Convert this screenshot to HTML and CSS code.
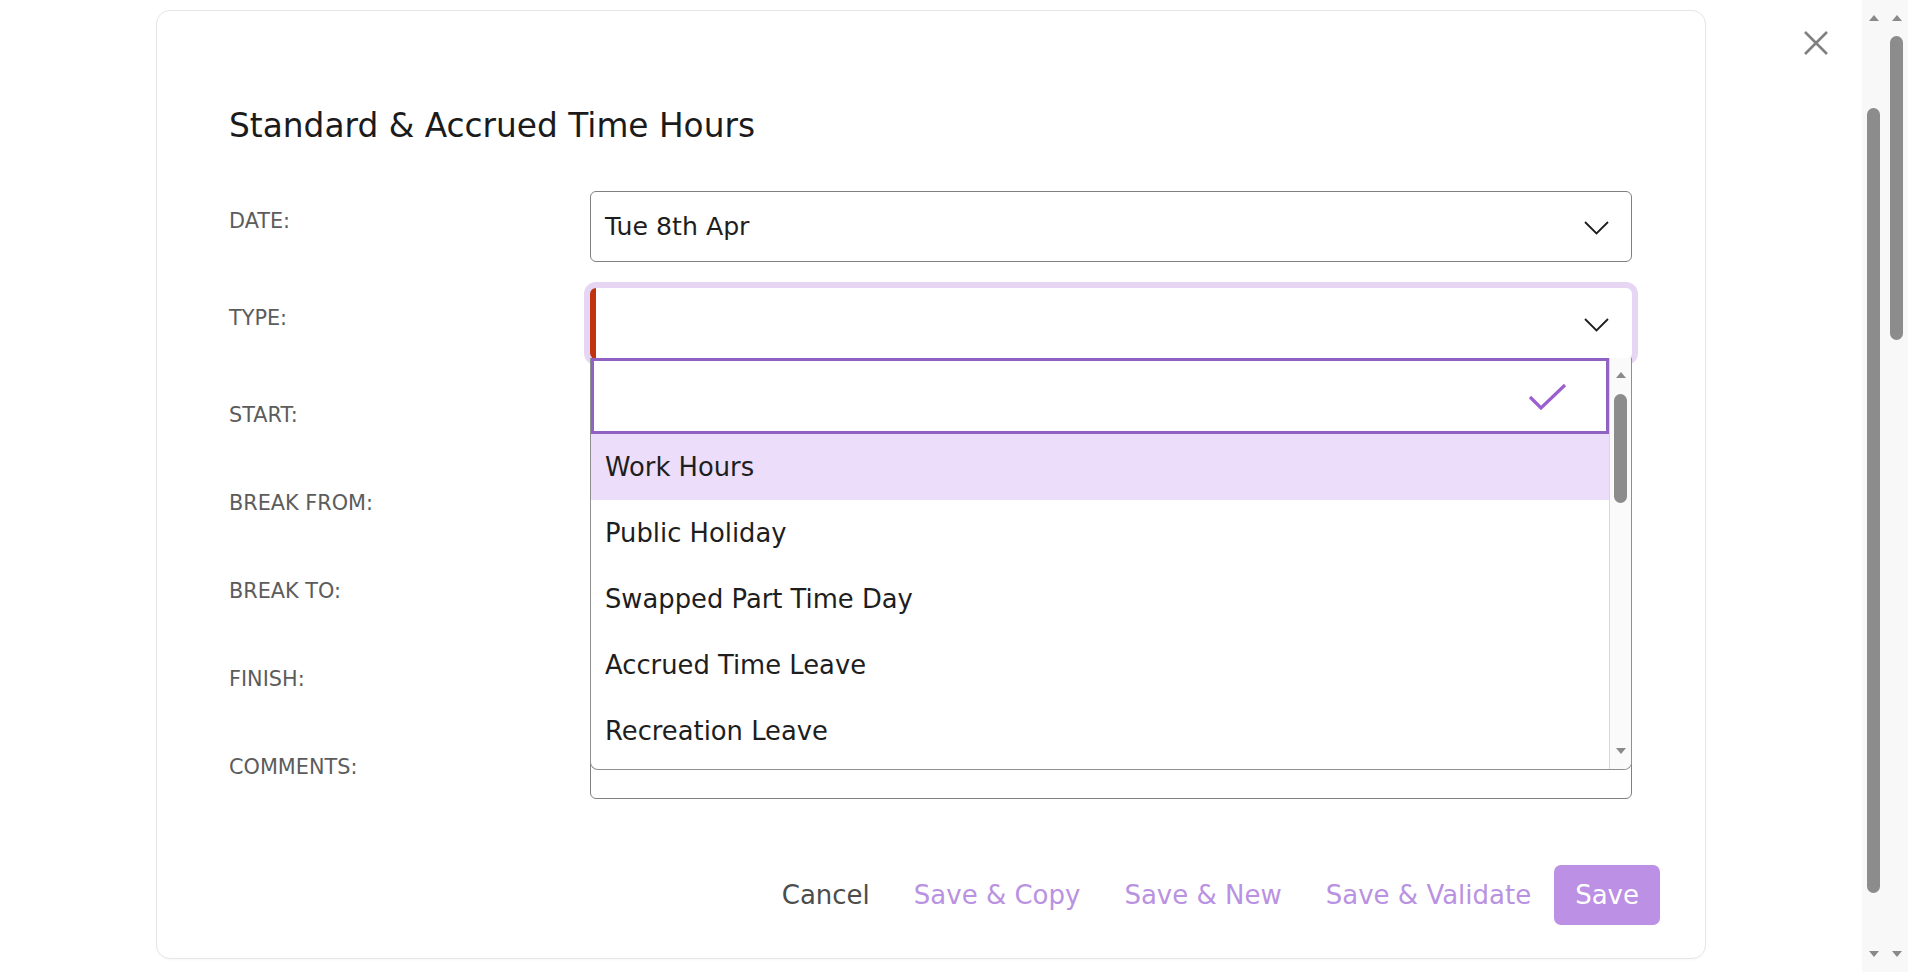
FILE: index.html
```html
<!DOCTYPE html>
<html lang="en">
<head>
<meta charset="utf-8">
<title>Standard &amp; Accrued Time Hours</title>
<link rel="stylesheet" href="styles.css">
</head>
<body>
<div class="stage">
  <div class="modal">
    <div class="modal-body">
      <h1 class="title">Standard &amp; Accrued Time Hours</h1>
      <div class="form">
        <div class="label">DATE:</div>
        <div class="field">
          <span class="value">Tue 8th Apr</span>
          <svg class="chev" viewBox="0 0 25 14"><polyline points="1,1 12.5,12.5 24,1" fill="none" stroke="#1e1e1e" stroke-width="1.8"/></svg>
        </div>

        <div class="label">TYPE:</div>
        <div class="field-wrap">
          <div class="field focused">
            <span class="value"></span>
            <svg class="chev" viewBox="0 0 25 14"><polyline points="1,1 12.5,12.5 24,1" fill="none" stroke="#1e1e1e" stroke-width="1.8"/></svg>
          </div>
          <div class="dropdown">
            <div class="dd-main">
              <div class="dd-search">
                <svg class="check" viewBox="0 0 39 27"><polyline points="2,14 13,25 37,2" fill="none" stroke="#9b5fd0" stroke-width="3.2"/></svg>
              </div>
              <ul class="dd-list">
                <li class="active">Work Hours</li>
                <li>Public Holiday</li>
                <li>Swapped Part Time Day</li>
                <li>Accrued Time Leave</li>
                <li>Recreation Leave</li>
              </ul>
            </div>
            <div class="dd-scroll">
              <span class="arrow up"></span>
              <span class="thumb"></span>
              <span class="spacer"></span>
              <span class="arrow down"></span>
            </div>
          </div>
        </div>

        <div class="label">START:</div>
        <div class="field short"></div>
        <div class="label">BREAK FROM:</div>
        <div class="field short"></div>
        <div class="label">BREAK TO:</div>
        <div class="field short"></div>
        <div class="label">FINISH:</div>
        <div class="field short"></div>
        <div class="label">COMMENTS:</div>
        <div class="field short"></div>
      </div>
    </div>
    <div class="modal-footer">
      <button class="btn cancel">Cancel</button>
      <button class="btn">Save &amp; Copy</button>
      <button class="btn">Save &amp; New</button>
      <button class="btn">Save &amp; Validate</button>
      <button class="btn primary">Save</button>
    </div>
  </div>
  <button class="close" aria-label="Close">
    <svg viewBox="0 0 26 26"><path d="M2 2 L24 24 M24 2 L2 24" stroke="#808080" stroke-width="2.6" fill="none"/></svg>
  </button>
</div>
<div class="sb sb-inner">
  <span class="arrow up"></span>
  <span class="thumb"></span>
  <span class="spacer"></span>
  <span class="arrow down"></span>
</div>
<div class="sb sb-outer">
  <span class="arrow up"></span>
  <span class="thumb"></span>
  <span class="spacer"></span>
  <span class="arrow down"></span>
</div>
</body>
</html>
```

FILE: styles.css
```css
html, body {
  margin: 0;
  padding: 0;
}
body {
  display: flex;
  height: 972px;
  overflow: hidden;
  background: #ffffff;
  font-family: "DejaVu Sans", "Noto Sans", sans-serif;
  color: #1e1e1e;
}
.stage {
  flex: 1;
  display: flex;
  align-items: flex-start;
}
.modal {
  margin: 10px 0 0 156px;
  width: 1550px;
  box-sizing: border-box;
  border: 1px solid #e6e6e6;
  border-radius: 14px;
  background: #fff;
  box-shadow: 0 1px 3px rgba(0, 0, 0, 0.03);
}
.modal-body {
  padding: 95px 73px 0 72px;
}
.title {
  margin: 0 0 45px;
  font-size: 32.8px;
  line-height: 40px;
  font-weight: normal;
  color: #1b1b1b;
}
.form {
  display: grid;
  grid-template-columns: 361px 1fr;
  row-gap: 26px;
}
.label {
  font-size: 20.8px;
  line-height: 24px;
  color: #5c5c5c;
  padding-top: 18px;
}
.field {
  height: 71px;
  box-sizing: border-box;
  border: 1px solid #808080;
  border-radius: 6px;
  display: flex;
  align-items: center;
  padding: 0 22px 0 14px;
  font-size: 25.2px;
  color: #1e1e1e;
  background: #fff;
}
.field.short {
  height: 62px;
}
.value {
  flex: 1;
}
.chev {
  width: 25px;
  height: 14px;
  margin-top: 3px;
}
.field-wrap {
  position: relative;
}
.field.focused {
  border: none;
  border-left: 6px solid #c1320f;
  box-shadow: 0 0 0 6px #e7d6f3;
  padding-right: 23px;
}
.dropdown {
  position: absolute;
  top: 70px;
  left: 0;
  right: 0;
  height: 412px;
  box-sizing: border-box;
  background: #fff;
  border: 1px solid #8f8f8f;
  border-top: none;
  border-radius: 0 0 8px 8px;
  display: flex;
  overflow: hidden;
  z-index: 2;
}
.dd-main {
  flex: 1;
  min-width: 0;
  display: flex;
  flex-direction: column;
}
.dd-search {
  height: 76px;
  flex: none;
  box-sizing: border-box;
  border: 3px solid #9261c4;
  display: flex;
  align-items: center;
  justify-content: flex-end;
  padding-right: 39px;
}
.check {
  width: 39px;
  height: 27px;
}
.dd-list {
  list-style: none;
  margin: 0;
  padding: 0;
}
.dd-list li {
  height: 66px;
  display: flex;
  align-items: center;
  padding-left: 14px;
  font-size: 25.8px;
  color: #1e1e1e;
}
.dd-list li.active {
  background: #ecdefa;
}
.dd-scroll {
  width: 22px;
  flex: none;
  box-sizing: border-box;
  background: #fafafa;
  border-left: 1px solid #d8d8d8;
  display: flex;
  flex-direction: column;
  align-items: center;
  padding: 14px 0 15px;
}
.dd-scroll .thumb {
  margin-top: 16px;
  height: 109px;
}
.arrow {
  width: 0;
  height: 0;
  flex: none;
  border-left: 5px solid transparent;
  border-right: 5px solid transparent;
}
.arrow.up {
  border-bottom: 6px solid #8a8a8a;
}
.arrow.down {
  border-top: 6px solid #8a8a8a;
}
.thumb {
  width: 13px;
  flex: none;
  border-radius: 7px;
  background: #8c8c8c;
}
.spacer {
  flex: 1;
}
.modal-footer {
  display: flex;
  justify-content: flex-end;
  align-items: center;
  gap: 2px;
  margin-top: 66px;
  padding: 0 45px 33px 0;
}
.btn {
  font-family: inherit;
  font-size: 26px;
  height: 60px;
  padding: 0 21px;
  border: none;
  background: none;
  color: #b992e2;
  border-radius: 7px;
  cursor: pointer;
}
.btn.cancel {
  color: #4d4d4d;
}
.btn.primary {
  background: #bc90e4;
  color: #ffffff;
}
.close {
  margin: 30px 0 0 97px;
  width: 26px;
  height: 26px;
  padding: 0;
  border: none;
  background: none;
}
.close svg {
  display: block;
  width: 26px;
  height: 26px;
}
.sb {
  width: 23px;
  flex: none;
  box-sizing: border-box;
  background: #f8f8f8;
  display: flex;
  flex-direction: column;
  align-items: center;
  padding: 15px 0;
}
.sb-inner .thumb {
  margin-top: 87px;
  height: 785px;
}
.sb-outer .thumb {
  margin-top: 15px;
  height: 304px;
}
```
